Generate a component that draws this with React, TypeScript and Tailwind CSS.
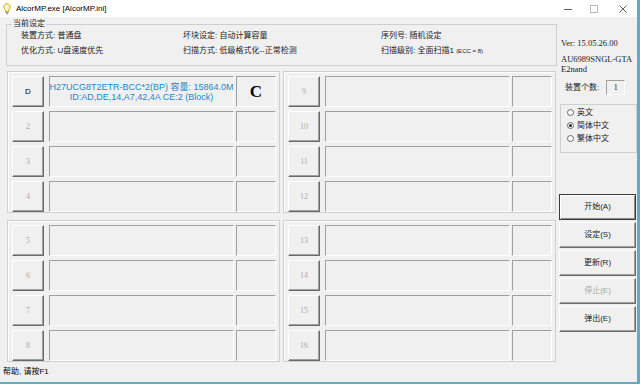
import React from "react";

type Port = { label: string; active?: boolean };

const groups: Port[][] = [
	[{ label: "D", active: true }, { label: "2" }, { label: "3" }, { label: "4" }],
	[{ label: "9" }, { label: "10" }, { label: "11" }, { label: "12" }],
	[{ label: "5" }, { label: "6" }, { label: "7" }, { label: "8" }],
	[{ label: "13" }, { label: "14" }, { label: "15" }, { label: "16" }],
];

const sans = "font-['Liberation_Sans','Noto_Sans_CJK_SC',sans-serif]";
const serif = "font-['Liberation_Serif','Noto_Sans_CJK_SC',serif]";

const raised =
	"bg-[#f0f0f0] border border-t-white border-l-white border-r-[#6b6b6b] border-b-[#6b6b6b] shadow-[inset_-1px_-1px_0_#a0a0a0]";
const sunken =
	"bg-[#f0f0f0] border border-t-[#a0a0a0] border-l-[#a0a0a0] border-r-white border-b-white";

const PortRow = ({ port }: { port: Port }) => (
	<div className="flex h-[31px]">
		<div
			className={`w-[32px] flex items-center justify-center ${raised} ${
				port.active
					? `${sans} text-[8px] text-black`
					: `${serif} text-[8px] text-[#ababab]`
			}`}
		>
			{port.label}
		</div>
		<div
			className={`ml-[5px] w-[185px] flex flex-col items-center justify-center ${sunken}`}
		>
			{port.active && (
				<div className={`${sans} text-[9px] leading-[10px] text-[#1c86cb] text-center whitespace-nowrap`}>
					<div>H27UCG8T2ETR-BCC*2(BP) 容量: 15864.0M</div>
					<div>ID:AD,DE,14,A7,42,4A CE:2 (Block)</div>
				</div>
			)}
		</div>
		<div className={`ml-[2px] w-[40px] flex items-center justify-center ${sunken}`}>
			{port.active && (
				<span className={`${serif} text-[17px] font-bold leading-none text-black`}>C</span>
			)}
		</div>
	</div>
);

const PortGroup = ({ ports }: { ports: Port[] }) => (
	<div className="h-[142px] border border-[#cfcfcf] shadow-[inset_1px_1px_0_#fff] pl-[4px] pt-[4px] flex flex-col gap-[4px]">
		{ports.map((p) => (
			<PortRow key={p.label} port={p} />
		))}
	</div>
);

const Radio = ({ label, checked }: { label: string; checked?: boolean }) => (
	<div className="flex items-center h-[13px] pl-[6px]">
		<span className="w-[7px] h-[7px] rounded-full border border-[#666] bg-white flex items-center justify-center">
			{checked && <span className="w-[3px] h-[3px] rounded-full bg-[#222]" />}
		</span>
		<span className={`ml-[3px] ${sans} text-[8px] leading-[10px] text-[#222]`}>{label}</span>
	</div>
);

const SideButton = ({
	label,
	disabled,
	primary,
}: {
	label: string;
	disabled?: boolean;
	primary?: boolean;
}) => (
	<div
		className={`h-[26px] w-[77px] flex items-center justify-center ${sans} text-[8px] ${
			primary
				? "bg-[#f0f0f0] border border-[#3a3a3a] shadow-[inset_1px_1px_0_#fff,inset_-1px_-1px_0_#8a8a8a]"
				: raised
		} ${disabled ? "text-[#a8a8a8]" : "text-[#222]"}`}
	>
		{label}
	</div>
);

export default function App() {
	return (
		<div className="w-[640px] h-[384px] bg-[#5eaebf] overflow-hidden">
			<div className="w-[637px] h-[382px] bg-[#f0f0f0] flex flex-col">
				{/* title bar */}
				<div className="h-[17px] bg-white flex items-center shrink-0">
					<svg width="8" height="12" viewBox="0 0 8 12" className="ml-[3px]">
						<path
							d="M4 0.8C2 0.8 0.8 2.3 0.8 4c0 1.4 0.9 2.2 1.5 3v1.5h3.4V7c0.6-0.8 1.5-1.6 1.5-3C7.2 2.3 6 0.8 4 0.8z"
							fill="#fff7c0"
							stroke="#c8a000"
							strokeWidth="0.9"
						/>
						<path d="M2.5 9.6h3M2.9 10.9h2.2" stroke="#808080" strokeWidth="0.9" />
					</svg>
					<span className={`ml-[5px] ${sans} text-[8px] text-black`}>
						AlcorMP.exe [AlcorMP.ini]
					</span>
					<div className="ml-auto flex h-full">
						<div className="w-[29px] flex items-center justify-center">
							<svg width="8" height="8" viewBox="0 0 8 8" className="ml-[6px]">
								<path d="M0 4.5h8" stroke="#333" strokeWidth="0.8" />
							</svg>
						</div>
						<div className="w-[29px] flex items-center justify-center">
							<svg width="8" height="8" viewBox="0 0 8 8">
								<rect x="0.5" y="0.5" width="7" height="7" fill="none" stroke="#aaa" strokeWidth="0.8" />
							</svg>
						</div>
						<div className="w-[29px] flex items-center justify-center">
							<svg width="8" height="8" viewBox="0 0 8 8">
								<path d="M0.5 0.5l7 7M7.5 0.5l-7 7" stroke="#333" strokeWidth="0.8" />
							</svg>
						</div>
					</div>
				</div>

				<div className="flex">
					{/* left column */}
					<div className="w-[557px] pl-[6px] pt-[2px] flex flex-col">
						<fieldset className="w-[551px] border border-[#cfcfcf] pb-[9px] pl-[14px]">
							<legend className={`-ml-[9px] px-[1px] ${sans} text-[8px] leading-[10px] text-[#222]`}>
								当前设定
							</legend>
							<div className={`pt-[2px] ${sans} text-[8px] leading-[10px] text-[#222] flex flex-col gap-[5px]`}>
								<div className="flex">
									<span className="w-[162px]">装置方式: 普通盘</span>
									<span className="w-[198px]">坏块设定: 自动计算容量</span>
									<span>序列号: 随机设定</span>
								</div>
								<div className="flex">
									<span className="w-[162px]">优化方式: U盘速度优先</span>
									<span className="w-[198px]">扫描方式: 低级格式化--正常检测</span>
									<span>
										扫描级别: 全面扫描1 <span className="text-[6px]">(ECC = 8)</span>
									</span>
								</div>
							</div>
						</fieldset>

						<div className="mt-[5px] ml-[1px] grid grid-cols-[273px_273px] gap-x-[3px] gap-y-[7px]">
							{groups.map((g, i) => (
								<PortGroup key={i} ports={g} />
							))}
						</div>
					</div>

					{/* right column */}
					<div className="ml-[2px] w-[78px] pt-[21px] flex flex-col">
						<div className={`ml-[2px] ${serif} text-[8.5px] leading-[10px] text-[#222]`}>
							Ver: 15.05.26.00
						</div>
						<div className={`ml-[2px] mt-[6px] ${serif} text-[8.5px] leading-[10px] text-[#222] whitespace-nowrap`}>
							<div>AU6989SNGL-GTA</div>
							<div>E2nand</div>
						</div>
						<div className="mt-[6px] flex items-center h-[15px]">
							<span className={`ml-[6px] ${sans} text-[8px] text-[#222]`}>装置个数:</span>
							<div
								className={`ml-[7px] w-[19px] h-[15px] flex items-center justify-center ${sunken} ${serif} text-[8px] text-[#222]`}
							>
								1
							</div>
						</div>
						<div className="mt-[9px] ml-[1px] w-[77px] h-[49px] border border-[#cfcfcf] pt-[1px]">
							<Radio label="英文" />
							<Radio label="简体中文" checked />
							<Radio label="繁体中文" />
						</div>
						<div className="mt-[41px] flex flex-col gap-[2px]">
							<SideButton label="开始(A)" primary />
							<SideButton label="设定(S)" />
							<SideButton label="更新(R)" />
							<SideButton label="停止(E)" disabled />
							<SideButton label="弹出(E)" />
						</div>
					</div>
				</div>

				{/* status bar */}
				<div className={`mt-[5px] ml-[3px] ${sans} text-[8px] leading-[10px] text-black`}>
					帮助, 请按F1
				</div>
			</div>
		</div>
	);
}
